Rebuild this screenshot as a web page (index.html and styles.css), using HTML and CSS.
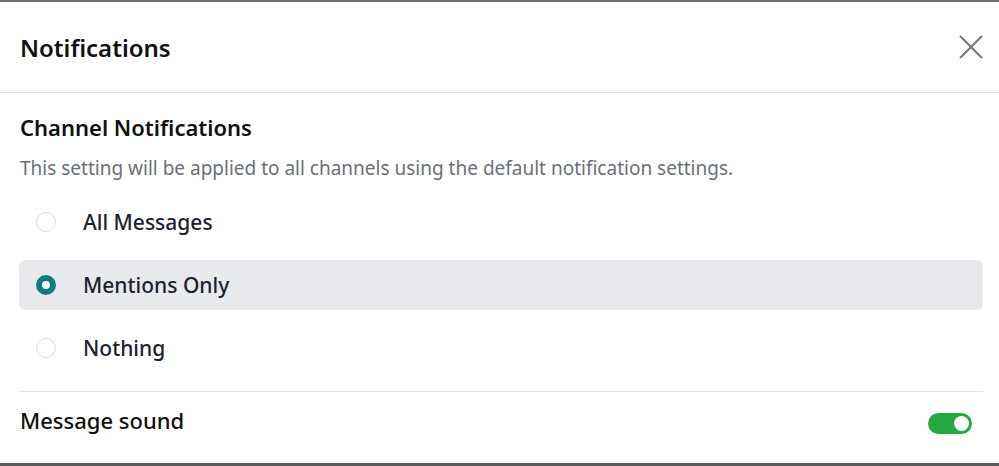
FILE: index.html
```html
<!DOCTYPE html>
<html lang="en">
<head>
    <meta charset="UTF-8">
    <meta name="viewport" content="width=device-width, initial-scale=1.0">
    <title>Notifications</title>
    <link rel="stylesheet" href="styles.css">
</head>
<body>
    <div class="modal">
        <!-- header -->
        <div class="modal-header">
            <h2>Notifications</h2>
            <button class="close-btn" aria-label="Close">
                <svg width="24" height="24" viewBox="0 0 24 24">
                    <path d="M1 1 L23 23 M23 1 L1 23" stroke="#767676" stroke-width="2" fill="none"/>
                </svg>
            </button>
        </div>

        <div class="modal-body">
            <h3>Channel Notifications</h3>
            <p class="hint">This setting will be applied to all channels using the default notification settings.</p>

            <div class="options">
                <label class="option">
                    <span class="radio"></span>
                    <span class="option-label">All Messages</span>
                </label>
                <label class="option selected">
                    <span class="radio"></span>
                    <span class="option-label">Mentions Only</span>
                </label>
                <label class="option">
                    <span class="radio"></span>
                    <span class="option-label">Nothing</span>
                </label>
            </div>

            <div class="sound-row">
                <span class="sound-label">Message sound</span>
                <span class="toggle on"><span class="knob"></span></span>
            </div>
        </div>
    </div>
</body>
</html>
```

FILE: styles.css
```css
/* styles.css */
body {
    margin: 0;
    font-family: "Noto Sans", "Open Sans", sans-serif;
    background-color: white;
}

.modal {
    height: 466px;
    box-sizing: border-box;
    border-top: 2px solid #6e6e6e;
    border-bottom: 3px solid #5a5a5a;
    background-color: white;
}

.modal-header {
    display: flex;
    justify-content: space-between;
    align-items: center;
    height: 90px;
    padding: 0 16px 0 20px;
    border-bottom: 1px solid #dedede;
}

.modal-header h2 {
    margin: 0;
    font-size: 24px;
    font-weight: 600;
    color: #111;
    line-height: 32px;
    padding-top: 2px;
}

.close-btn {
    background: none;
    border: none;
    padding: 0;
    width: 24px;
    height: 24px;
    cursor: pointer;
}

.modal-body {
    padding: 0 16px 0 19px;
}

.modal-body h3 {
    margin: 20px 0 0 1px;
    font-size: 22px;
    font-weight: 600;
    color: #111;
    line-height: 28px;
}

.hint {
    margin: 15px 0 0 1px;
    font-size: 19px;
    color: #6b7078;
    line-height: 24px;
}

.options {
    display: flex;
    flex-direction: column;
    gap: 13px;
    margin-top: 17px;
}

.option {
    display: flex;
    align-items: center;
    height: 50px;
    padding: 0 17px;
    border-radius: 6px;
    cursor: pointer;
}

.option.selected {
    background-color: #e8e9ec;
}

.radio {
    width: 20px;
    height: 20px;
    box-sizing: border-box;
    border: 1px solid #dcdcdc;
    border-radius: 50%;
    background-color: white;
    margin-right: 27px;
}

.option.selected .radio {
    border: 6px solid #0e7c7d;
}

.option-label {
    font-size: 21px;
    font-weight: 500;
    color: #1c2230;
}

.sound-row {
    display: flex;
    justify-content: space-between;
    align-items: center;
    margin: 18px 0 0 1px;
    padding: 13px 11px 0 0;
    border-top: 1px solid #e3e3e3;
}

.sound-label {
    font-size: 22px;
    font-weight: 500;
    color: #111;
    line-height: 30px;
}

.toggle {
    display: flex;
    align-items: center;
    justify-content: flex-end;
    width: 44px;
    height: 21px;
    box-sizing: border-box;
    padding: 0 3px;
    border-radius: 11px;
    background-color: #ccc;
    margin-top: 6px;
}

.toggle.on {
    background-color: #28a745;
}

.knob {
    width: 15px;
    height: 15px;
    border-radius: 50%;
    background-color: white;
}
```
